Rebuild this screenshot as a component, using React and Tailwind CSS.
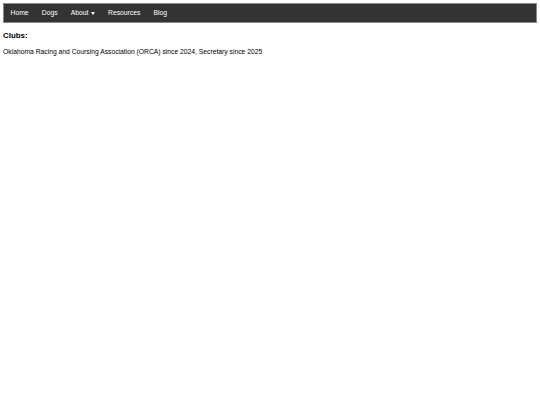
import React from 'react';

const links = ['Home', 'Dogs', 'About', 'Resources', 'Blog'];

export default function App() {
  return (
    <div className="min-h-[405px] bg-white px-[3px] pt-[3px] text-black" style={{ fontFamily: '"Liberation Sans", Arial, sans-serif' }}>
      {/* NAV */}
      <nav className="flex h-[20px] items-center border border-[#888] bg-[#333]">
        {links.map((l) => (
          <a key={l} className="flex items-center px-[6.6px] text-[6.75px] leading-none text-white">
            {l}
            {l === 'About' && (
              <span className="ml-[2.5px] inline-block h-0 w-0 border-x-[2.5px] border-t-[3px] border-x-transparent border-t-white" />
            )}
          </a>
        ))}
      </nav>

      <h3 className="mt-[8px] text-[7.9px] font-bold leading-[9px]">Clubs:</h3>
      <p className="mt-[7.5px] text-[6.75px] leading-[8px]">
        Oklahoma Racing and Coursing Association (ORCA) since 2024, Secretary since 2025
      </p>
    </div>
  );
}
